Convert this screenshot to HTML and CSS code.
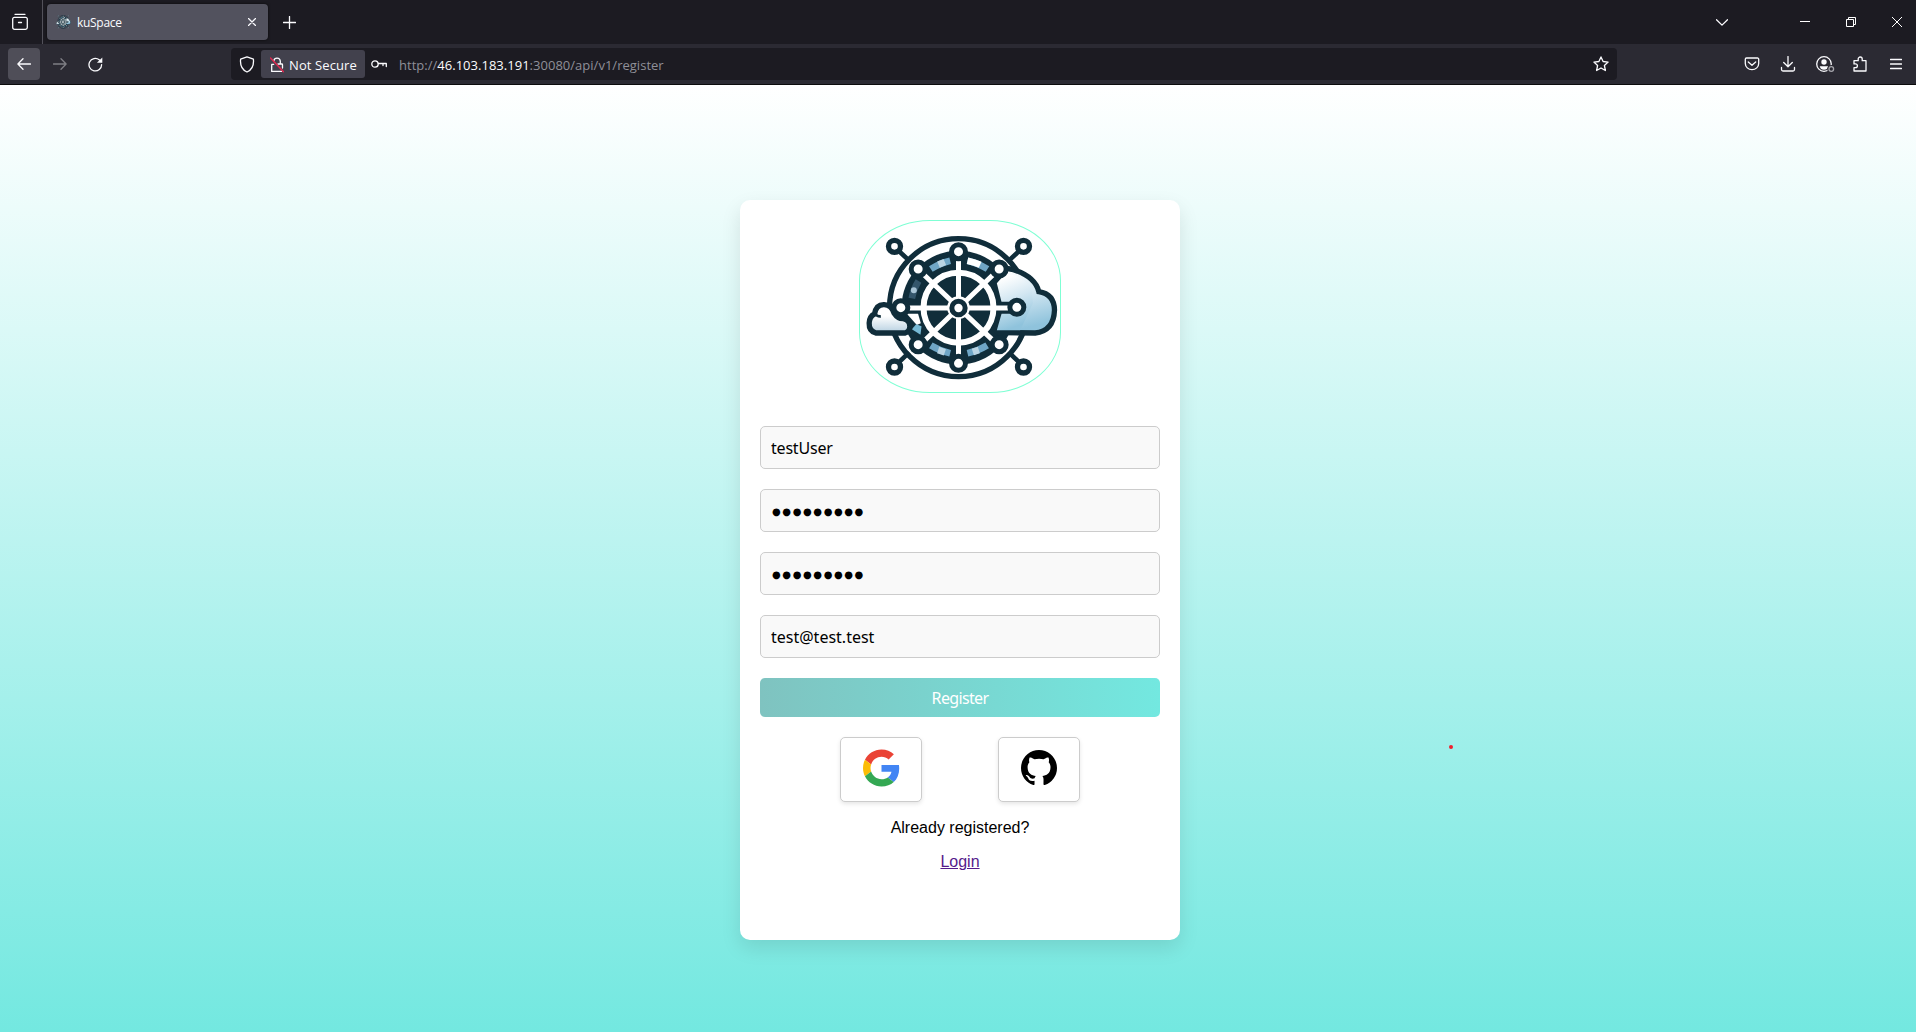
FILE: index.html
```html
<!DOCTYPE html>
<html lang="en">
<head>
<meta charset="utf-8">
<title>kuSpace</title>
<link rel="stylesheet" href="styles.css">
</head>
<body>
<svg class="defs" width="0" height="0" aria-hidden="true">
  <defs>
    <linearGradient id="cloud" x1="0" y1="0" x2="0.25" y2="1"><stop offset="0.1" stop-color="#fff"/><stop offset="0.5" stop-color="#d3e7f2"/><stop offset="1" stop-color="#8fc3dc"/></linearGradient>
    <linearGradient id="puff" x1="0" y1="0" x2="0" y2="1"><stop offset="0.4" stop-color="#fff"/><stop offset="1" stop-color="#b5cfe0"/></linearGradient>
    <symbol id="logo" viewBox="29.500 18 600 513">
      <g fill="none" stroke="#102d3a" stroke-width="16">
        <circle cx="325" cy="278" r="207"/>
        <path stroke-width="14" d="M145 107l32 30M508 107l-32 30M145 443l32-31M508 443l-32-31"/>
        <g fill="#fff"><circle cx="133" cy="94" r="18"/><circle cx="520" cy="94" r="18"/><circle cx="133" cy="456" r="18"/><circle cx="520" cy="456" r="18"/></g>
        <path fill="url(#cloud)" d="M420 352V160Q455 155 490 164Q555 185 566 230Q612 237 613 285Q611 348 555 354Z"/>
      </g>
      <circle cx="325" cy="278" r="171" fill="#102d3a"/>
      <path fill="url(#cloud)" d="M440 205L462 180Q510 170 545 225L548 265L510 346H440L455 293H500V265H455Z"/>
      <g fill="none" stroke-width="20">
        <path stroke="#6fa6c6" d="M242 162Q268 145 300 137M352 137Q385 145 412 162M242 391Q268 407 300 415M352 415Q385 407 411 391"/>
        <path stroke="#fff" d="M352 137Q375 142 390 149"/>
        <path stroke="#bad4e3" d="M265 149L284 141M264 405L284 412M368 411L386 405"/>
        <path stroke="#34566b" d="M205 198Q190 222 185 250"/>
      </g>
      <circle cx="191" cy="226" r="9" fill="#a8c4d5"/>
      <path fill="#fff" d="M168 294H203L212 325L200 330Z"/>
      <path fill="#76b9d5" d="M185 343L198 328L214 334L211 359Z"/>
      <g stroke="#102d3a" fill="none" stroke-width="36" stroke-linecap="round">
        <path d="M325 278V112M325 278V446M325 278H170M325 278H500M325 278L206 163M325 278L447 163M325 278L206 389M325 278L447 389"/>
      </g>
      <circle cx="325" cy="278" r="116" fill="#102d3a"/>
      <circle cx="325" cy="278" r="105" fill="none" stroke="#fff" stroke-width="18"/>
      <path d="M325 130V426M175 279H477M222 180L426 374M428 180L222 378" fill="none" stroke="#fff" stroke-width="15"/>
      <circle cx="325" cy="278" r="34" fill="#fff"/>
      <g fill="#fff" stroke="#102d3a" stroke-width="15">
        <circle cx="325" cy="279" r="20"/>
        <circle cx="325" cy="110" r="21"/><circle cx="325" cy="445" r="21"/><circle cx="500" cy="277" r="21"/>
        <circle cx="152" cy="278" r="21"/><circle cx="204" cy="162" r="21"/><circle cx="447" cy="162" r="21"/><circle cx="204" cy="389" r="21"/><circle cx="447" cy="389" r="21"/>
        <path fill="url(#puff)" stroke-width="16" d="M77 354Q56 348 57 324Q58 304 73 297Q78 268 102 269Q124 270 132 295Q143 312 160 311Q179 316 179 334Q179 350 165 354Z"/>
      </g>
      <path fill="none" stroke="#102d3a" stroke-width="8" d="M76 296Q80 305 92 304"/>
    </symbol>
  </defs>
</svg>

<header class="browser">
  <div class="tabs">
    <div class="recent">
      <svg width="18" height="18" viewBox="0 0 18 18" class="line"><path d="M4 1.300h10M3.300 4.400h11.400a1.600 1.600 0 0 1 1.600 1.600v8.500a1.800 1.800 0 0 1-1.800 1.800h-11a1.800 1.800 0 0 1-1.800-1.800V6a1.600 1.600 0 0 1 1.600-1.600zM7.500 9.500h3"/></svg>
    </div>
    <div class="tab">
      <svg class="favicon" width="15" height="14" viewBox="48 65 578 432" preserveAspectRatio="none"><use href="#logo" x="29.500" y="18" width="600" height="513"/></svg>
      <span class="tab-title">kuSpace</span>
      <svg width="8" height="8" viewBox="0 0 8 8" class="line"><path d="M.5.5l7 7M7.500.5l-7 7"/></svg>
    </div>
    <svg class="line new-tab" width="13" height="13" viewBox="0 0 13 13"><path d="M6.500.5v12M.5 6.500h12"/></svg>
    <div class="window-controls">
      <svg class="line" width="12" height="7" viewBox="0 0 12 7"><path d="M.5.7L6 6.100 11.500.7"/></svg>
      <svg class="thin" width="10" height="10" viewBox="0 0 10 10"><path d="M0 4.500h10"/></svg>
      <svg class="thin" width="10" height="10" viewBox="0 0 10 10"><path d="M.5 2.500h7v7h-7zM2.500 2.500v-2h7v7h-2"/></svg>
      <svg class="thin" width="10" height="10" viewBox="0 0 10 10"><path d="M0 0l10 10M10 0L0 10"/></svg>
    </div>
  </div>
  <div class="toolbar">
    <div class="nav">
      <span class="back"><svg class="line" width="14" height="12" viewBox="0 0 14 12"><path d="M13.500 6H1M6 .8L.9 6 6 11.200"/></svg></span>
      <svg class="line dim" width="14" height="12" viewBox="0 0 14 12"><path d="M.5 6h12.500M8 .8L13.100 6 8 11.200"/></svg>
      <svg class="line" width="15" height="15" viewBox="0 0 15 15"><path d="M13.600 7.600A6.300 6.300 0 1 1 11.200 2.700L13.200 4.600"/><path d="M14.300.4v5.400H8.900z" fill="#fbfbfe" stroke="none"/></svg>
    </div>
    <div class="address">
      <svg class="line" width="16" height="17" viewBox="0 0 16 17"><path d="M8 .9L14.400 3.200C15 9 12.500 14 8 16 3.500 14 1 9 1.600 3.200z"/></svg>
      <span class="security">
        <svg class="line" width="14" height="17" viewBox="0 0 14 17"><path d="M3.800 4.800a3.300 3.300 0 0 1 6.500.2v3M8 8h3.800a.7.7 0 0 1 .7.700V12M1.700 9v6.400h9.800M1.700 8.300h2"/><path d="M.5 2L13.300 15.600" stroke="#e22850" stroke-width="1.500"/></svg>
        <span class="security-label">Not Secure</span>
      </span>
      <svg class="line key" width="16" height="10" viewBox="0 0 16 10"><circle cx="4" cy="5" r="3.200"/><path d="M7.300 4.500H15.300V7.500M12 4.500V6.500"/></svg>
      <span class="url">http://<b>46.103.183.191</b>:30080/api/v1/register</span>
      <svg class="line star" width="16" height="16" viewBox="0 0 16 16"><path d="M8 .9l2.100 4.600 5 .6-3.700 3.400 1 5L8 12l-4.400 2.500 1-5L.9 6.100l5-.6z"/></svg>
    </div>
    <div class="actions">
      <svg class="line" width="16" height="16" viewBox="0 0 16 16"><path d="M2.500 2h11a1.200 1.200 0 0 1 1.200 1.200V7.500a6.700 6.200 0 0 1-13.400 0V3.200A1.200 1.200 0 0 1 2.500 2zM4.300 6L8 9.300 11.700 6"/></svg>
      <svg class="line" width="16" height="16" viewBox="0 0 16 16"><path d="M8 .5v10M3.700 6.500L8 10.800l4.300-4.300M1.500 11.500v2a1.500 1.500 0 0 0 1.500 1.500h10a1.500 1.500 0 0 0 1.500-1.500v-2"/></svg>
      <svg class="line account" width="19" height="16" viewBox="0 0 19 16"><circle cx="8" cy="8" r="7.300"/><circle cx="8" cy="6" r="2.700" fill="#fbfbfe" stroke="none"/><path d="M3.700 10.200h8.600Q11.500 13.800 8 13.800t-4.300-3.600z" fill="#fbfbfe" stroke="none"/><circle cx="15.300" cy="13" r="4" fill="#2b2a33" stroke="none"/><circle cx="15.300" cy="13" r="2.300" stroke="#a6a6ac"/></svg>
      <svg class="line" width="16" height="16" viewBox="0 0 16 16"><path d="M2 7V4.700h4.200V3a2 2 0 0 1 4 0v1.700H14V15H2v-3.300h1.500a1.900 1.900 0 0 0 0-3.800H2z"/></svg>
      <svg class="line menu" width="12" height="12" viewBox="0 0 12 12"><path d="M.5 1.500h11M.5 6h11M.5 10.500h11"/></svg>
    </div>
  </div>
</header>

<main class="page">
  <section class="card">
    <svg class="logo"><use href="#logo"/></svg>
    <form class="form">
      <input class="field" type="text" value="testUser">
      <div class="field dots">●●●●●●●●●</div>
      <div class="field dots">●●●●●●●●●</div>
      <input class="field email" type="text" value="test@test.test">
      <button class="submit" type="button"><span>Register</span></button>
    </form>
    <div class="providers">
      <button class="provider" type="button" aria-label="Google">
        <svg width="37" height="38" viewBox="0 0 48 48"><path fill="#EA4335" d="M24 9.500c3.540 0 6.710 1.220 9.210 3.600l6.850-6.850C35.900 2.380 30.470 0 24 0 14.620 0 6.510 5.380 2.560 13.220l7.980 6.190C12.430 13.720 17.740 9.500 24 9.500z"/><path fill="#4285F4" d="M46.980 24.550c0-1.570-.15-3.090-.38-4.550H24v9.020h12.940c-.58 2.960-2.260 5.480-4.780 7.180l7.730 6c4.510-4.180 7.090-10.360 7.090-17.650z"/><path fill="#FBBC05" d="M10.530 28.590c-.48-1.450-.76-2.990-.76-4.590s.27-3.140.76-4.590l-7.980-6.190C.92 16.460 0 20.120 0 24c0 3.880.92 7.540 2.560 10.780l7.970-6.190z"/><path fill="#34A853" d="M24 48c6.480 0 11.930-2.130 15.890-5.810l-7.730-6c-2.150 1.450-4.920 2.300-8.160 2.300-6.260 0-11.570-4.220-13.470-9.910l-7.980 6.190C6.510 42.620 14.620 48 24 48z"/></svg>
      </button>
      <button class="provider" type="button" aria-label="GitHub">
        <svg width="36" height="36" viewBox="0 0 16 16"><path d="M8 0C3.580 0 0 3.580 0 8c0 3.540 2.290 6.530 5.470 7.590.4.070.55-.17.55-.38 0-.19-.01-.82-.01-1.490-2.010.37-2.530-.49-2.690-.94-.09-.23-.48-.94-.82-1.130-.28-.15-.68-.52-.01-.53.63-.01 1.080.58 1.230.82.72 1.210 1.870.87 2.330.66.070-.52.280-.87.510-1.070-1.780-.2-3.640-.89-3.640-3.950 0-.87.310-1.590.82-2.150-.08-.2-.36-1.020.08-2.120 0 0 .67-.21 2.200.82.640-.18 1.320-.27 2-.27s1.360.09 2 .27c1.530-1.040 2.200-.82 2.200-.82.44 1.100.16 1.920.08 2.120.51.56.82 1.270.82 2.150 0 3.070-1.870 3.750-3.650 3.950.29.25.54.73.54 1.480 0 1.070-.01 1.930-.01 2.200 0 .21.15.46.55.38A8.010 8.010 0 0 0 16 8c0-4.420-3.580-8-8-8z"/></svg>
      </button>
    </div>
    <p class="hint">Already registered?</p>
    <a class="login" href="#">Login</a>
  </section>
  <span class="pointer-dot"></span>
</main>
</body>
</html>
```
FILE: styles.css
```css
* { box-sizing: border-box; }
body { margin: 0; height: 1032px; overflow: hidden; display: flex; flex-direction: column; font-family: "Liberation Sans", Arial, sans-serif; }
svg { display: block; flex: none; }
.defs { position: absolute; }

.browser { flex: none; height: 85px; border-bottom: 1px solid #0c0c0d; color: #fbfbfe; background: #2b2a33; font-family: "Open Sans", "Noto Sans", sans-serif; }
.line { fill: none; stroke: #fbfbfe; stroke-width: 1.3; stroke-linecap: round; stroke-linejoin: round; }
.thin { fill: none; stroke: #fff; stroke-width: 1; }
.dim { opacity: .4; }
.tabs { display: flex; align-items: center; height: 44px; background: #1c1b22; }
.recent { display: flex; align-items: center; width: 43px; height: 44px; padding-left: 11px; border-right: 1px solid #52515a; }
.tab { display: flex; align-items: center; width: 221px; height: 36px; margin-left: 4px; padding: 0 12px 0 8px; border-radius: 4px; background: #52525e; box-shadow: 0 0 3px rgba(0, 0, 0, .7); }
.favicon { margin: 0 6px 0 1px; }
.tab-title { flex: 1; padding-top: 1px; font-size: 12px; letter-spacing: -.3px; }
.new-tab { margin-left: 15px; }
.window-controls { display: flex; align-items: center; margin-left: auto; padding-right: 14px; }
.window-controls svg + svg { margin-left: 36px; }
.window-controls svg:nth-child(2) { margin-left: 72px; }

.toolbar { display: flex; align-items: center; height: 40px; }
.nav { display: flex; align-items: center; width: 231px; padding-left: 8px; }
.back { display: flex; align-items: center; justify-content: center; width: 32px; height: 32px; margin-right: 13px; border-radius: 4px; background: #4f4e58; }
.nav .dim { margin-right: 21px; }
.address { display: flex; align-items: center; width: 1386px; height: 32px; padding: 0 8px; border-radius: 4px; background: #1c1b22; }
.security { display: flex; align-items: center; width: 104px; height: 28px; margin-left: 6px; padding-left: 9px; border-radius: 3px; background: #42414d; }
.security-label { margin-left: 5px; padding-top: 1px; font-size: 13px; letter-spacing: .1px; white-space: nowrap; }
.key { margin-left: 6px; }
.url { margin-left: 12px; padding-top: 1px; font-size: 13px; letter-spacing: .02px; color: #8f8f98; white-space: nowrap; }
.url b { font-weight: 400; color: #fbfbfe; }
.star { margin-left: auto; }
.actions { display: flex; align-items: center; gap: 20px; margin-left: auto; padding-right: 14px; }
.account { margin-right: -3px; }
.menu { margin-left: 2px; }

.page { position: relative; flex: 1; padding: 115px 0 0 4px; background: linear-gradient(#fff, #73e8e0); }
.card { display: flex; flex-direction: column; align-items: center; width: 440px; height: 740px; margin: 0 auto; padding: 20px; border-radius: 10px; background: #fff; box-shadow: 0 8px 20px rgba(0, 0, 0, .1); }
.logo { width: 202px; height: 173px; border: 1px solid #7fffd4; border-radius: 35%; }
.form { display: flex; flex-direction: column; gap: 20px; width: 400px; margin-top: 33px; }
.field { display: block; width: 400px; height: 43px; margin: 0; padding: 1px 10px 0; border: 1px solid #ccc; border-radius: 5px; background: #f9f9f9; color: #000; font: 16px/40px "Noto Sans", sans-serif; letter-spacing: -.2px; }
.email { letter-spacing: 0; }
.dots { padding: 2px 11px 0; font: 10px/40px "DejaVu Sans", sans-serif; letter-spacing: 1.6px; }
.submit { height: 39px; padding: 0; border: 0; border-radius: 5px; background: linear-gradient(90deg, #7fc3c0, #73e8e0); color: #fff; font: 16px "Noto Sans", sans-serif; letter-spacing: -.65px; }
.providers { display: flex; gap: 76px; margin-top: 20px; }
.provider { display: flex; justify-content: center; width: 82px; height: 65px; padding: 11px 0 0; border: 1px solid #ccc; border-radius: 5px; background: #fff; box-shadow: 0 2px 4px rgba(0, 0, 0, .1); }
.provider + .provider { padding-top: 12px; }
.hint { margin: 17px 0 0; font-size: 16px; line-height: 18px; }
.login { margin-top: 16px; font-size: 16px; line-height: 18px; color: #551a8b; }
.pointer-dot { position: absolute; left: 1448.5px; top: 660px; width: 4px; height: 4px; border-radius: 50%; background: #f01f2c; }
```
